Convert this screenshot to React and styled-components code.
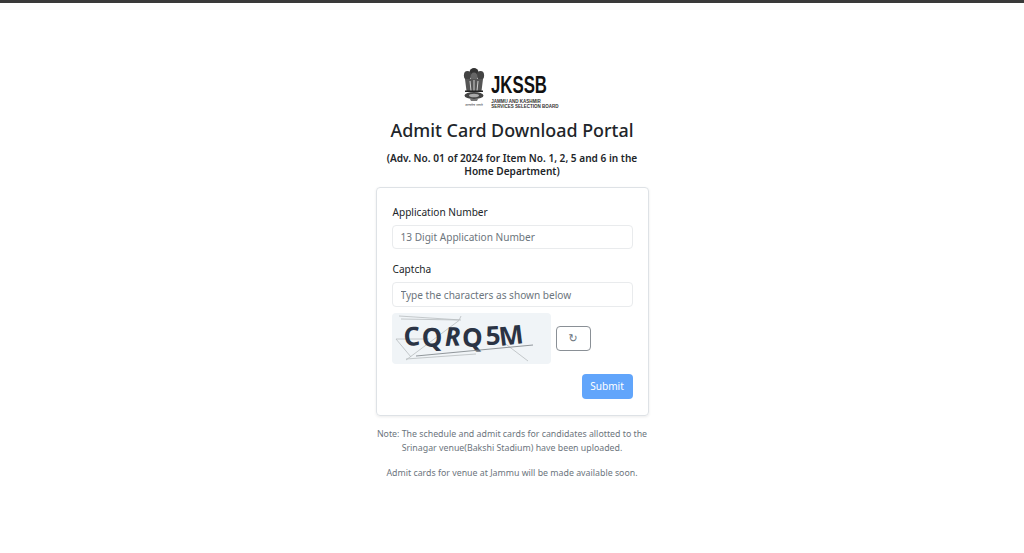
import styled, { createGlobalStyle } from "styled-components";

const GlobalStyle = createGlobalStyle`
    html, body {
        margin: 0;
        padding: 0;
        background: #fff;
    }
    body {
        font-family: "Noto Sans", "Open Sans", sans-serif;
        color: #212529;
    }
`;

const Page = styled.div`
    min-height: 553px;
    border-top: 3px solid #3a3a3a;
    box-sizing: border-box;
    display: flex;
    flex-direction: column;
    align-items: center;
    padding-top: 64px;
`;

const Logo = styled.div`
    display: flex;
    align-items: flex-start;
    gap: 6px;
    height: 41px;
    margin-left: 7px;
`;

const BrandText = styled.div`
    display: flex;
    flex-direction: column;
    padding-top: 8px;
`;

const BrandName = styled.div`
    font-family: "Liberation Sans", sans-serif;
    font-weight: 700;
    font-size: 23px;
    line-height: 21px;
    margin-bottom: 3px;
    color: #111;
    transform-origin: left;
    transform: scaleX(0.73);
`;

const BrandSub = styled.div`
    font-family: "Liberation Sans", sans-serif;
    font-weight: 700;
    font-size: 4.5px;
    line-height: 5px;
    white-space: nowrap;
    color: #333;
`;

const Title = styled.h1`
    margin: 9px 0 0;
    font-size: 17.9px;
    line-height: 26px;
    font-weight: 500;
    color: #212529;
`;

const Subtitle = styled.h2`
    margin: 9px 0 0;
    width: 273px;
    text-align: center;
    font-size: 10.1px;
    line-height: 13.4px;
    font-weight: 600;
    color: #212529;
`;

const Card = styled.form`
    margin-top: 8px;
    width: 273px;
    height: 229px;
    box-sizing: border-box;
    padding: 16px 15px;
    border: 1px solid #dee2e6;
    border-radius: 4px;
    box-shadow: 0 1px 3px rgba(0, 0, 0, 0.08);
    display: flex;
    flex-direction: column;
`;

const Label = styled.label`
    font-size: 10.1px;
    line-height: 16px;
    margin-bottom: 5px;
    padding-left: 1px;
    color: #212529;
`;

const Input = styled.input`
    width: 100%;
    height: 25px;
    box-sizing: border-box;
    padding: 0 8px;
    margin-bottom: ${(p) => p.$gap}px;
    font-family: inherit;
    font-size: 10.1px;
    border: 1px solid #e9ebed;
    border-radius: 4px;
    outline: none;
    &::placeholder {
        color: #6c757d;
        opacity: 1;
    }
`;

const CaptchaRow = styled.div`
    display: flex;
    align-items: center;
    gap: 5px;
`;

const CaptchaImage = styled.svg`
    width: 159px;
    height: 51px;
    display: block;
    border-radius: 4px;
`;

const RefreshButton = styled.button`
    width: 35px;
    height: 25px;
    padding: 0;
    display: flex;
    align-items: center;
    justify-content: center;
    background: #fff;
    border: 1px solid #8a9096;
    border-radius: 4px;
    color: #6c757d;
    font-size: 11px;
    font-family: "DejaVu Sans", sans-serif;
`;

const Actions = styled.div`
    display: flex;
    justify-content: flex-end;
    margin-top: 10px;
`;

const SubmitButton = styled.button`
    width: 51px;
    height: 25px;
    padding: 0;
    background: #61a5fb;
    color: #fff;
    border: 0;
    border-radius: 4px;
    font-family: inherit;
    font-size: 10.1px;
`;

const Note = styled.p`
    margin: ${(p) => p.$top}px 0 0;
    width: 280px;
    text-align: center;
    font-size: 8.8px;
    line-height: 14px;
    color: #6c757d;
`;

const Emblem = () => (
    <svg width="22" height="41" viewBox="0 0 22 41">
        <g fill="#333">
            <ellipse cx="11" cy="5" rx="4.4" ry="4" />
            <ellipse cx="4.5" cy="8.5" rx="3.6" ry="4.4" fill="#444" />
            <ellipse cx="17.5" cy="8.5" rx="3.6" ry="4.4" fill="#444" />
            <ellipse cx="11" cy="10" rx="3.4" ry="4.6" fill="#666" />
            <path d="M2 12 L20 12 L18.5 24 L3.5 24 Z" fill="#555" />
            <path d="M7 14 L8 24 M11 13 L11 24 M15 14 L14 24" stroke="#ddd" strokeWidth="0.9" />
            <rect x="2" y="23.5" width="18" height="1.5" fill="#222" />
            <ellipse cx="11" cy="28.5" rx="9.5" ry="3.6" fill="#444" />
            <ellipse cx="11" cy="28.5" rx="5" ry="1.8" fill="#aaa" />
            <path d="M7 32 L15 32 L14 34 L8 34 Z" fill="#777" />
        </g>
        <text x="11" y="38.5" textAnchor="middle" fontSize="3.6" fontFamily="Noto Sans, sans-serif" fill="#444">
            सत्यमेव जयते
        </text>
    </svg>
);

const Captcha = () => (
    <CaptchaImage viewBox="0 0 159 51">
        <rect width="159" height="51" fill="#f0f4f7" />
        <g stroke="#b8bcbf" strokeWidth="0.8" fill="none">
            <path d="M7 3 L69 7" />
            <path d="M9 6 L67 7" />
            <path d="M69 3 L67 7.5 L14 47" />
            <path d="M4 26 L19 44" />
            <path d="M4 26 L37 26" />
            <path d="M14 46 L84 41" />
            <path d="M111 29 L136 48" />
        </g>
        <g fontFamily="Open Sans, sans-serif" fontWeight="700" fontSize="26" fill="#2a3344">
            <text x="12" y="33" transform="rotate(-3 12 33)">C</text>
            <text x="30" y="34" transform="rotate(-2 30 34)">Q</text>
            <text x="53" y="33" fontStyle="italic" transform="rotate(-2 53 33)">R</text>
            <text x="70" y="34">Q</text>
            <text x="94" y="32" transform="rotate(-2 94 32)">5</text>
            <text x="108" y="33" transform="rotate(-7 108 33)">M</text>
        </g>
        <path d="M24 43 L141 32" stroke="#858b90" strokeWidth="0.9" fill="none" />
    </CaptchaImage>
);

const App = () => (
    <Page>
        <GlobalStyle />
        <Logo>
            <Emblem />
            <BrandText>
                <BrandName>JKSSB</BrandName>
                <BrandSub>JAMMU AND KASHMIR</BrandSub>
                <BrandSub>SERVICES SELECTION BOARD</BrandSub>
            </BrandText>
        </Logo>
        <Title>Admit Card Download Portal</Title>
        <Subtitle>(Adv. No. 01 of 2024 for Item No. 1, 2, 5 and 6 in the Home Department)</Subtitle>
        <Card onSubmit={(e) => e.preventDefault()}>
            <Label>Application Number</Label>
            <Input $gap={12} placeholder="13 Digit Application Number" />
            <Label>Captcha</Label>
            <Input $gap={6} placeholder="Type the characters as shown below" />
            <CaptchaRow>
                <Captcha />
                <RefreshButton type="button">↻</RefreshButton>
            </CaptchaRow>
            <Actions>
                <SubmitButton>Submit</SubmitButton>
            </Actions>
        </Card>
        <Note $top={11}>
            Note: The schedule and admit cards for candidates allotted to the Srinagar venue(Bakshi Stadium) have been uploaded.
        </Note>
        <Note $top={11}>Admit cards for venue at Jammu will be made available soon.</Note>
    </Page>
);

export default App;
